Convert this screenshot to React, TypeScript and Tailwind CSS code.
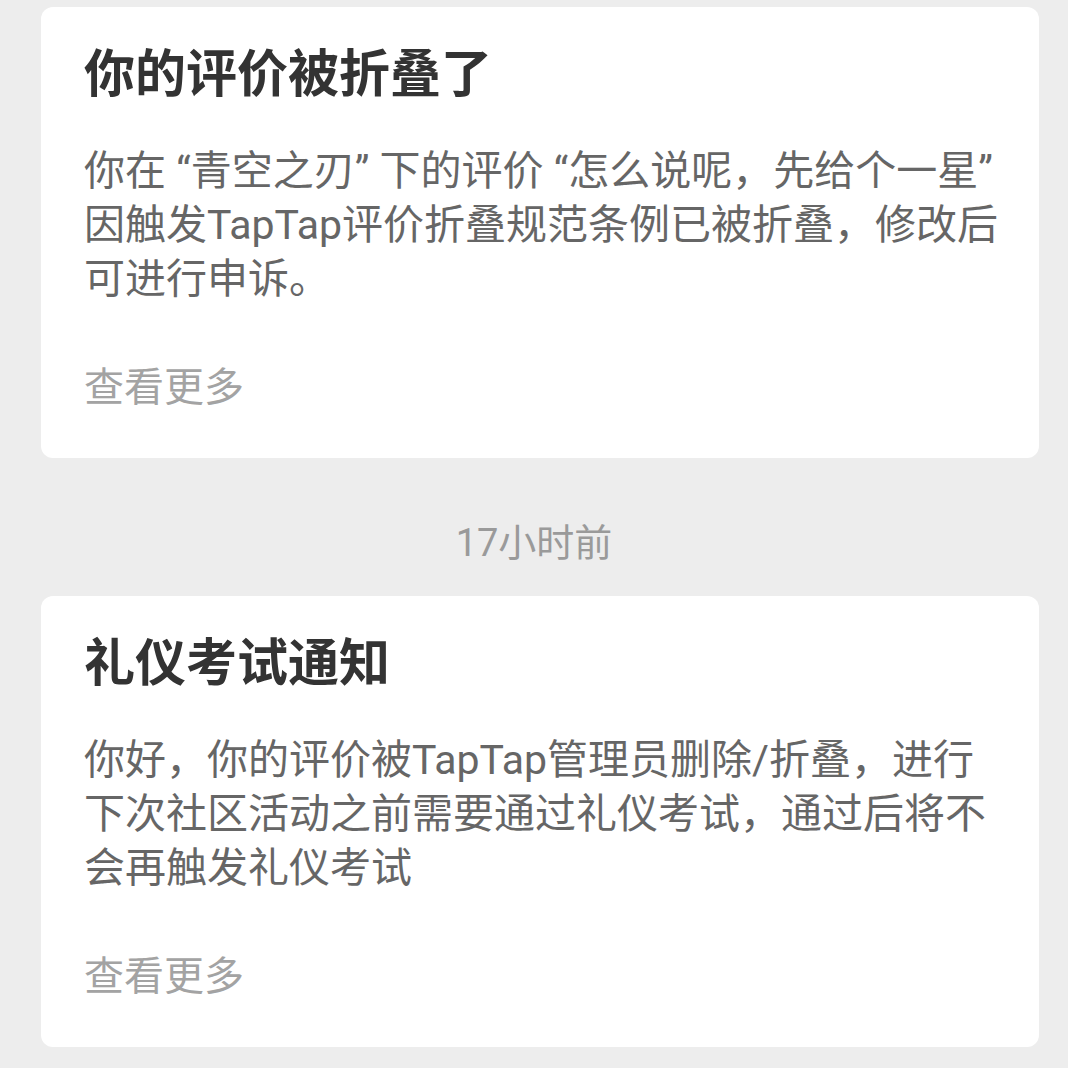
import React from "react";

const font = { fontFamily: 'Roboto, "Noto Sans CJK SC", sans-serif' };

type Notice = { title: string; lines: string[] };

const notices: Notice[] = [
  {
    title: "你的评价被折叠了",
    lines: [
      "你在 “青空之刃” 下的评价 “怎么说呢，先给个一星”",
      "因触发TapTap评价折叠规范条例已被折叠，修改后",
      "可进行申诉。",
    ],
  },
  {
    title: "礼仪考试通知",
    lines: [
      "你好，你的评价被TapTap管理员删除/折叠，进行",
      "下次社区活动之前需要通过礼仪考试，通过后将不",
      "会再触发礼仪考试",
    ],
  },
];

function NoticeCard({ notice }: { notice: Notice }) {
  return (
    <div className="ml-[41px] mr-[29px] rounded-[12px] bg-white px-[43px] pt-[36px] pb-[43px]">
      <div className="text-[51px] leading-[64px] font-bold text-[#333333]">{notice.title}</div>
      <div className="mt-[37px] text-[41px] leading-[54px] text-[#666666]">
        {notice.lines.map((l, i) => (
          <div key={i} className="whitespace-nowrap">{l}</div>
        ))}
      </div>
      <div className="mt-[55px] text-[40px] leading-[54px] text-[#a3a3a3]">查看更多</div>
    </div>
  );
}

export default function App() {
  return (
    <div className="min-h-[1068px] bg-[#ededed] pt-[7px]" style={font}>
      <NoticeCard notice={notices[0]} />
      <div className="flex h-[138px] items-center justify-center pt-[32px] text-[38px] text-[#9a9a9a]">17小时前</div>
      <NoticeCard notice={notices[1]} />
    </div>
  );
}
